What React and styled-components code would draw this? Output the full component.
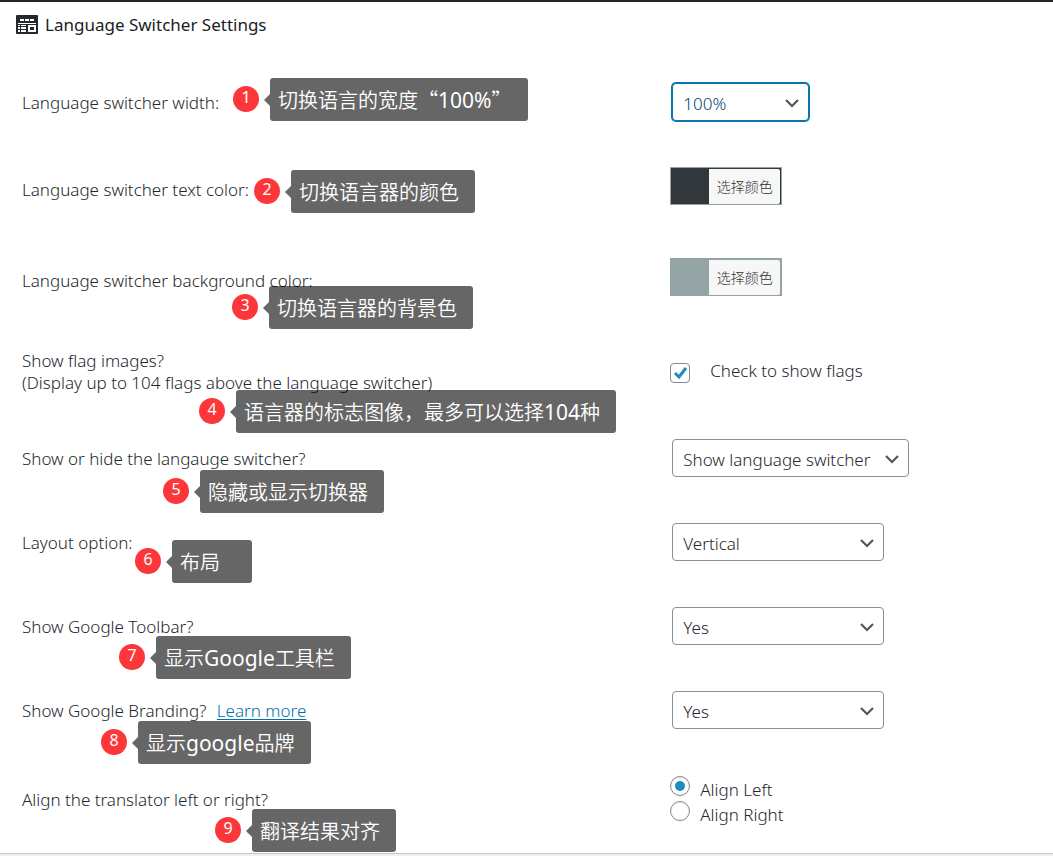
import React from "react";
import styled, { createGlobalStyle } from "styled-components";

const GlobalStyle = createGlobalStyle`
  *, *::before, *::after { box-sizing: border-box; }
  body {
    margin: 0;
    background: #f0f0f0;
    color: #23282d;
    font-family: "Noto Sans", "Open Sans", "Noto Sans CJK SC", sans-serif;
    font-size: 17px;
    font-weight: 300;
    line-height: 22px;
  }
`;

const Panel = styled.main`
  padding-top: 12px;
  background: #fff;
  border-top: 2px solid #23252a;
  border-bottom: 1px solid #c3c4c7;
`;

const Heading = styled.h1`
  display: flex;
  align-items: center;
  gap: 7px;
  margin: 0 0 24px;
  padding-left: 16px;
  color: #1a1e22;
  font-size: 17px;
  font-weight: 400;
  line-height: 22px;
`;

const Rows = styled.div`
  padding: 0 2px 7px 22px;
`;

const Row = styled.div`
  position: relative;
  display: grid;
  grid-template-columns: minmax(0, 63fr) minmax(0, 37fr);
  align-items: center;
  min-height: ${(p) => p.$height || 84}px;
`;

const Prompt = styled.div`
  padding-top: ${(p) => (p.$low ? 8 : 2)}px;
`;

const Link = styled.a`
  margin-left: 6px;
  color: #0073aa;
  text-underline-offset: 2px;
`;

const SelectWrap = styled.div`
  display: inline-grid;
  align-items: center;
  width: ${(p) => p.$width}px;
  margin-left: 2px;
  vertical-align: middle;

  > * { grid-area: 1 / 1; }
`;

const Select = styled.select`
  width: 100%;
  height: 38px;
  padding: 3px 32px 0 10px;
  appearance: none;
  border: 1px solid ${(p) => (p.$active ? "#0a75aa" : "#8c8f94")};
  border-radius: 4px;
  outline: none;
  background: #fff;
  box-shadow: ${(p) => (p.$active ? "0 0 0 1px #0a75aa" : "none")};
  color: ${(p) => (p.$active ? "#004a78" : "#23282d")};
  font: inherit;
`;

const Chevron = styled.svg`
  justify-self: end;
  margin-top: 1px;
  margin-right: 9px;
  pointer-events: none;
`;

const ColorButton = styled.button`
  display: flex;
  width: 112px;
  height: 38px;
  padding: 1px 1px 0 38px;
  border: 1px solid #95a5a6;
  background: ${(p) => p.$color};
  font: inherit;
  cursor: pointer;
`;

const ColorText = styled.span`
  flex: 1;
  border-radius: 0 2px 2px 0;
  background: #f7f7f7;
  color: #333;
  font-size: 14px;
  line-height: 35px;
  text-align: center;
`;

const Choice = styled.label`
  display: flex;
  align-items: center;
  gap: ${(p) => p.$gap}px;
  height: 25px;
`;

const Checkbox = styled.input`
  width: 20px;
  height: 20px;
  margin: 0;
  appearance: none;
  border: 1px solid #7e8993;
  border-radius: 4px;
  background: #fff;
`;

const CheckWrap = styled.span`
  display: grid;
  place-items: center;
  margin-top: 4px;

  > * { grid-area: 1 / 1; }
  svg { pointer-events: none; }
`;

const Choices = styled.div`
  padding-top: 6px;
`;

const Radio = styled.input`
  display: grid;
  place-items: center;
  width: 20px;
  height: 20px;
  margin: 0 0 7px;
  appearance: none;
  border: 1px solid #7e8993;
  border-radius: 50%;
  background: #fff;
  box-shadow: inset 0 1px 2px rgba(0, 0, 0, 0.1);

  &:checked::before {
    content: "";
    width: 10px;
    height: 10px;
    border-radius: 50%;
    background: #1e8cbe;
  }
`;

const Note = styled.div`
  position: absolute;
  z-index: 1;
  left: ${(p) => p.$x}px;
  top: ${(p) => p.$y}px;
  display: flex;
  align-items: center;
  color: #fff;
  white-space: nowrap;
`;

const Badge = styled.span`
  width: 26px;
  height: 26px;
  margin-bottom: 2px;
  border-radius: 50%;
  background: #fd3639;
  font-size: 16px;
  font-weight: 400;
  line-height: 23px;
  text-align: center;
`;

const Arrow = styled.span`
  margin-left: 5px;
  border: 6px solid transparent;
  border-left: 0;
  border-right-color: rgba(0, 0, 0, 0.6);
`;

const Bubble = styled.span`
  min-width: 80px;
  height: 43px;
  padding: 0 16px 0 8px;
  border-radius: 3px;
  background: rgba(0, 0, 0, 0.6);
  font-family: "Noto Sans CJK SC", sans-serif;
  font-size: 20px;
  font-weight: 350;
  line-height: 43px;
`;

const Latin = styled.span`
  font-family: "Noto Sans", sans-serif;
  font-size: 21px;
  font-weight: 400;
  line-height: 1;
`;

function Callout({ n, x, y, children }) {
  return (
    <Note $x={x} $y={y}>
      <Badge>{n}</Badge>
      <Arrow />
      <Bubble lang="zh-CN">{children}</Bubble>
    </Note>
  );
}

function Dropdown({ id, width = 212, active, options }) {
  return (
    <div>
      <SelectWrap $width={width}>
        <Select id={id} $active={active}>
          {options.map((o) => <option key={o}>{o}</option>)}
        </Select>
        <Chevron width="16" height="16" viewBox="0 0 16 16" fill="none" stroke="#50575e" strokeWidth="2.2">
          <path d="M2 5l6 6 6-6" />
        </Chevron>
      </SelectWrap>
    </div>
  );
}

function ColorPicker({ id, color }) {
  return (
    <ColorButton id={id} type="button" $color={color}>
      <ColorText lang="zh-CN">选择颜色</ColorText>
    </ColorButton>
  );
}

function SettingsIcon() {
  return (
    <svg width="22" height="20" viewBox="0 0 22 20" aria-hidden="true">
      <rect width="22" height="19" rx="1" fill="#23282d" />
      <path fill="#fff" d="M4 4h4v2H4zM9 4h4v2H9zM14 4h4v2h-4zM2 8h18v1H2zM2 10h2v1H2zM5 10h5v1H5zM2 12h2v2H2zM5 12h5v2H5zM2 15h2v2H2zM5 15h5v2H5zM12 10h8v7h-8z" />
      <path fill="#23282d" d="M14 12h4v3h-4z" />
    </svg>
  );
}

export default function App() {
  return (
    <>
      <GlobalStyle />
      <Panel>
        <Heading><SettingsIcon />Language Switcher Settings</Heading>
        <Rows>
          <Row>
            <Prompt><label htmlFor="width">Language switcher width:</label></Prompt>
            <Dropdown id="width" width={137} active options={["100%", "50%"]} />
            <Callout n={1} x={211} y={18}>切换语言的宽度“<Latin>100%</Latin>”</Callout>
          </Row>
          <Row>
            <Prompt $low><label htmlFor="text-color">Language switcher text color:</label></Prompt>
            <ColorPicker id="text-color" color="#32373c" />
            <Callout n={2} x={232} y={26}>切换语言器的颜色</Callout>
          </Row>
          <Row $height={98}>
            <Prompt $low><label htmlFor="bg-color">Language switcher background color:</label></Prompt>
            <ColorPicker id="bg-color" color="#95a5a6" />
            <Callout n={3} x={210} y={58}>切换语言器的背景色</Callout>
          </Row>
          <Row $height={90}>
            <Prompt>
              Show flag images?<br />
              (Display up to 104 flags above the language switcher)
            </Prompt>
            <Choice $gap={20}>
              <CheckWrap>
                <Checkbox type="checkbox" defaultChecked />
                <svg width="14" height="14" viewBox="0 0 14 14" fill="none" stroke="#1e8cbe" strokeWidth="3">
                  <path d="M2 7l4 4 7-9" />
                </svg>
              </CheckWrap>
              Check to show flags
            </Choice>
            <Callout n={4} x={177} y={64}>语言器的标志图像，最多可以选择<Latin>104</Latin>种</Callout>
          </Row>
          <Row>
            <Prompt><label htmlFor="visibility">Show or hide the langauge switcher?</label></Prompt>
            <Dropdown id="visibility" width={237} options={["Show language switcher", "Hide language switcher"]} />
            <Callout n={5} x={141} y={54}>隐藏或显示切换器</Callout>
          </Row>
          <Row>
            <Prompt><label htmlFor="layout">Layout option:</label></Prompt>
            <Dropdown id="layout" options={["Vertical", "Horizontal"]} />
            <Callout n={6} x={113} y={40}>布局</Callout>
          </Row>
          <Row>
            <Prompt><label htmlFor="toolbar">Show Google Toolbar?</label></Prompt>
            <Dropdown id="toolbar" options={["Yes", "No"]} />
            <Callout n={7} x={97} y={52}>显示<Latin>Google</Latin>工具栏</Callout>
          </Row>
          <Row>
            <Prompt>
              <label htmlFor="branding">Show Google Branding?</label> <Link href="#branding">Learn more</Link>
            </Prompt>
            <Dropdown id="branding" options={["Yes", "No"]} />
            <Callout n={8} x={79} y={53}>显示<Latin>google</Latin>品牌</Callout>
          </Row>
          <Row $height={94}>
            <Prompt id="align-label">Align the translator left or right?</Prompt>
            <Choices role="radiogroup" aria-labelledby="align-label">
              <Choice $gap={10}><Radio type="radio" name="align" defaultChecked />Align Left</Choice>
              <Choice $gap={10}><Radio type="radio" name="align" />Align Right</Choice>
            </Choices>
            <Callout n={9} x={193} y={57}>翻译结果对齐</Callout>
          </Row>
        </Rows>
      </Panel>
    </>
  );
}
